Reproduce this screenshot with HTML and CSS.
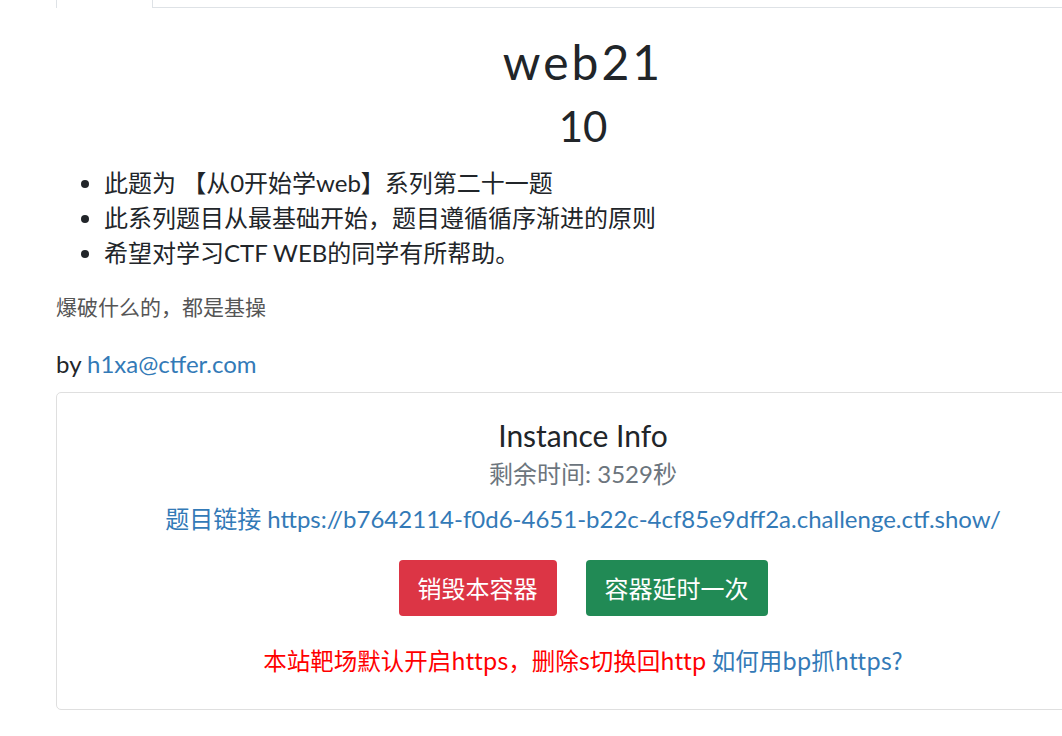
FILE: index.html
```html
<!DOCTYPE html>
<html lang="zh">
<head>
<meta charset="utf-8">
<title>web21</title>
<link rel="stylesheet" href="styles.css">
</head>
<body>
<div class="tabs">
  <div class="tab-active"></div>
  <div class="tab-rest"></div>
</div>
<div class="container">
  <h2 class="challenge-name">web21</h2>
  <h3 class="challenge-value">10</h3>
  <ul class="desc-list">
    <li>此题为 【从0开始学web】系列第二十一题</li>
    <li>此系列题目从最基础开始，题目遵循循序渐进的原则</li>
    <li>希望对学习CTF WEB的同学有所帮助。</li>
  </ul>
  <p class="hint">爆破什么的，都是基操</p>
  <p class="author">by <a class="link" href="#">h1xa@ctfer.com</a></p>
  <div class="card">
    <h5 class="card-title">Instance Info</h5>
    <h6 class="card-subtitle">剩余时间: 3529秒</h6>
    <p class="card-link-row"><a class="link" href="#">题目链接 https://b7642114-f0d6-4651-b22c-4cf85e9dff2a.challenge.ctf.show/</a></p>
    <div class="btn-row">
      <button class="btn btn-danger">销毁本容器</button>
      <button class="btn btn-success">容器延时一次</button>
    </div>
    <p class="notice"><span class="red">本站靶场默认开启https，删除s切换回http</span> <a class="link" href="#">如何用bp抓https?</a></p>
  </div>
</div>
</body>
</html>
```

FILE: styles.css
```css
html, body {
  margin: 0;
  padding: 0;
  overflow: hidden;
  background: #fff;
}
body {
  font-family: Lato, "Noto Sans CJK SC", sans-serif;
  color: #212529;
  width: 1062px;
  height: 736px;
}
.tabs {
  display: flex;
  margin-left: 56px;
  height: 8px;
}
.tab-active {
  width: 95px;
  border-left: 1px solid #dee2e6;
  border-right: 1px solid #dee2e6;
}
.tab-rest {
  flex: 1;
  border-bottom: 1px solid #dee2e6;
}
.container {
  margin-left: 56px;
  width: 1054px;
}
.challenge-name {
  margin: 25px 0 0;
  text-align: center;
  font-size: 48px;
  font-weight: 400;
  line-height: 1.2;
  letter-spacing: 3px;
}
.challenge-value {
  margin: 10px 0 0;
  text-align: center;
  font-size: 42px;
  font-weight: 400;
  line-height: 1.2;
}
.desc-list {
  margin: 14px 0 0;
  padding-left: 48px;
  font-size: 24px;
  line-height: 35px;
}
.hint {
  margin: 23px 0 0;
  font-family: "Liberation Serif", "Noto Sans CJK SC", serif;
  font-size: 21px;
  line-height: 31px;
  color: #555;
}
.author {
  margin: 22px 0 0;
  font-size: 24px;
  line-height: 36px;
}
.link {
  color: #337ab7;
  text-decoration: none;
}
.card {
  box-sizing: border-box;
  margin-top: 10px;
  border: 1px solid #dfdfdf;
  border-radius: 5px;
  padding: 24px 20px 31px;
  text-align: center;
  height: 318px;
}
.card-title {
  margin: 0;
  font-size: 30px;
  font-weight: 400;
  line-height: 1.2;
}
.card-subtitle {
  margin: 7px 0 0;
  font-size: 24px;
  font-weight: 400;
  line-height: 1.2;
  color: #6c757d;
}
.card-link-row {
  margin: 12px 0 0;
  font-size: 24px;
  line-height: 36px;
}
.btn-row {
  display: flex;
  justify-content: center;
  gap: 29px;
  margin-top: 23px;
}
.btn {
  font-family: "Noto Sans CJK SC", sans-serif;
  font-size: 24px;
  line-height: 36px;
  height: 56px;
  padding: 10px 19px;
  border: 0;
  border-radius: 4px;
  color: #fff;
}
.btn-danger {
  background: #dc3545;
}
.btn-success {
  background: #218a55;
}
.notice {
  margin: 26px 0 0;
  font-family: "Noto Sans CJK SC", sans-serif;
  font-size: 23.5px;
  line-height: 36px;
}
.red {
  color: #ff0000;
}
```
